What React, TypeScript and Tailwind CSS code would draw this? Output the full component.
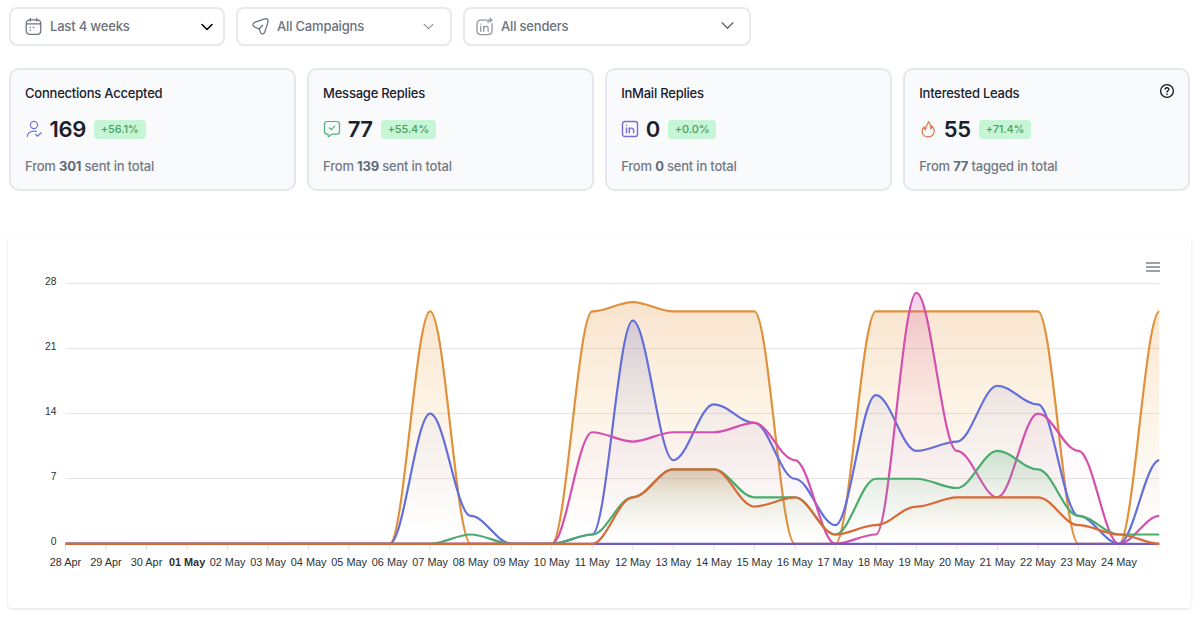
import type { ReactNode } from "react";
import clsx from "clsx";

const Svg = ({ className, children }: { className?: string; children: ReactNode }) => (
    <svg
        viewBox="0 0 24 24"
        fill="none"
        stroke="currentColor"
        strokeWidth={1.6}
        strokeLinecap="round"
        strokeLinejoin="round"
        className={clsx("flex-shrink-0", className)}
    >
        {children}
    </svg>
);

const CalendarIcon = () => (
    <Svg className="w-[19px] h-[19px]">
        <path d="M8 2v3M16 2v3M3 8.8h18" />
        <path d="M21.2 8.5V17c0 3-1.5 5-5 5H7.8c-3.5 0-5-2-5-5V8.5c0-3 1.5-5 5-5h8.4c3.5 0 5 2 5 5Z" />
        <path d="M8 13.2h.01M12 13.2h.01M8 16.8h.01" strokeWidth={2} />
    </Svg>
);

const SendIcon = () => (
    <Svg className="w-[19px] h-[19px]">
        <path d="M6.1 6.1 16.6 2.6c4.2-1.2 5.6.2 4.6 4.5l-3.3 10.6c-1.6 5-4.7 5.2-6.4.6l-1-3.2-3.7-1.4C1 11.6 1.2 8.1 6.1 6.1Z" />
        <path d="m10.7 14.6 4-4.2" />
    </Svg>
);

const SenderIcon = () => (
    <Svg className="w-[19px] h-[19px] text-[#8f949d]">
        <path d="M15 4H7.500C4.200 4 2.500 5.700 2.500 9v8.200c0 3.300 1.700 5 5 5h9c3.300 0 5-1.700 5-5V8.500" />
        <path d="M16.500 7V4H21M19 1.800 21.300 4 19 6.200" />
        <path d="M7.300 12v6M7.300 9v.01M11 18v-6M11 14.500c0-3.400 5.600-3.400 5.600 0V18" />
    </Svg>
);

const UserIcon = () => (
    <Svg className="w-[18px] h-[18px] text-[#7472dc]">
        <circle cx="12" cy="6.600" r="4.800" />
        <path d="M3 22c0-4 3.700-7.200 9-7.200 1.200 0 2.300.2 3.300.5" />
        <path d="m14.200 19.300 2.400 2.300 5-4.600" />
    </Svg>
);

const MessageIcon = () => (
    <Svg className="w-[18px] h-[18px] text-[#4fae7b]">
        <path d="M6.800 18.800H5.500c-2.300 0-3.500-1.200-3.500-3.500V5.500C2 3.200 3.200 2 5.500 2h13C20.800 2 22 3.200 22 5.500v9.800c0 2.300-1.200 3.500-3.500 3.500H12l-4 3.100c-.7.500-1.200.2-1.200-.6Z" />
        <path d="m8.400 10.500 2.500 2.400 4.800-4.700" />
    </Svg>
);

const InMailIcon = () => (
    <Svg className="w-[18px] h-[18px] text-[#7c6cd6]">
        <rect x="2" y="2" width="20" height="20" rx="3" strokeWidth={1.9} />
        <path d="M7.300 10.500v6.500M7.300 7v.01M11 17v-6.500M11 13.500c0-3.600 5.800-3.600 5.800 0V17" strokeWidth={1.9} />
    </Svg>
);

const FlameIcon = () => (
    <Svg className="w-[18px] h-[18px] text-[#e0744a]">
        <path d="M12.500 2.200c.4 3.200-4.300 5.500-3.800 10.600-1.400-.6-2-1.800-1.900-3.700-4.600 4.800-3 13.300 5.200 13.300 8.600 0 10.700-9.400 4.900-14.400.2 1.800-.1 3-1.200 3.800.2-3.800-.5-7.400-3.200-9.600Z" />
    </Svg>
);

const HelpIcon = () => (
    <Svg className="w-4 h-4 -mr-px text-[#111827]">
        <circle cx="12" cy="12" r="9.600" strokeWidth={2} />
        <path d="M9.200 9.300c.5-3.200 5.700-2.800 5.700.2 0 2-2.900 2.300-2.900 4" strokeWidth={2} />
        <path d="M12 17v.01" strokeWidth={2.4} />
    </Svg>
);

type SelectProps = {
    icon: ReactNode;
    label: string;
    className: string;
    chevronClass: string;
};

const Select = ({ icon, label, className, chevronClass }: SelectProps) => (
    <button
        className={clsx(
            "flex items-center h-[39px] border-2 border-[#e8e9ed] rounded-lg text-[13px] tracking-[-0.18px] font-medium text-[#6b7280]",
            className
        )}
    >
        {icon}
        <span className="ml-[7px] flex-grow text-left">{label}</span>
        <svg
            viewBox="0 0 12 8"
            fill="none"
            stroke="currentColor"
            strokeLinecap="round"
            strokeLinejoin="round"
            className={clsx("flex-shrink-0", chevronClass)}
        >
            <path d="m1 1.500 5 5 5-5" />
        </svg>
    </button>
);

type Stat = {
    title: string;
    icon: ReactNode;
    value: number;
    change: string;
    total: number;
    verb: string;
    help?: boolean;
};

const stats: Stat[] = [
    { title: "Connections Accepted", icon: <UserIcon />, value: 169, change: "+56.1%", total: 301, verb: "sent" },
    { title: "Message Replies", icon: <MessageIcon />, value: 77, change: "+55.4%", total: 139, verb: "sent" },
    { title: "InMail Replies", icon: <InMailIcon />, value: 0, change: "+0.0%", total: 0, verb: "sent" },
    { title: "Interested Leads", icon: <FlameIcon />, value: 55, change: "+71.4%", total: 77, verb: "tagged", help: true },
];

const StatCard = ({ title, icon, value, change, total, verb, help }: Stat) => (
    <div className="flex flex-col h-[123px] pt-[13px] px-[14px] bg-[#f9fafc] border-2 border-[#e5e7eb] rounded-[10px]">
        <div className="flex items-start justify-between h-5">
            <h3 className="text-[13px] leading-5 tracking-[-0.22px] font-medium text-[#1a202c]">{title}</h3>
            {help && <HelpIcon />}
        </div>
        <div className="flex items-center h-7 mt-[12px]">
            {icon}
            <span className="ml-[6.600px] text-[22px] leading-7 tracking-[-0.4px] font-semibold text-[#1a202c]">{value}</span>
            <span className="ml-2 px-[7px] h-[19px] leading-[19px] text-[11px] tracking-[-0.13px] font-medium text-[#48a05f] bg-[#c6f6d5] rounded">
                {change}
            </span>
        </div>
        <p className="mt-[13px] text-[13px] leading-5 tracking-[-0.2px] font-medium text-[#737985]">
            From <b className="font-bold text-[#626a78]">{total}</b> {verb} in total
        </p>
    </div>
);

// plot area
const LEFT = 57.5;
const RIGHT = 1151.5;
const TOP = 48.5;
const BOTTOM = 308.8;
const MAX = 28;

const labels = [
    "28 Apr", "29 Apr", "30 Apr", "01 May", "02 May", "03 May", "04 May", "05 May", "06 May",
    "07 May", "08 May", "09 May", "10 May", "11 May", "12 May", "13 May", "14 May", "15 May",
    "16 May", "17 May", "18 May", "19 May", "20 May", "21 May", "22 May", "23 May", "24 May",
];

const series = [
    { id: "sent", color: "#e0913a", mid: 0.14, midColor: "#f0ac4e", data: [0, 0, 0, 0, 0, 0, 0, 0, 0, 25, 0, 0, 0, 25, 26, 25, 25, 25, 0, 0, 25, 25, 25, 25, 25, 0, 0, 25] },
    { id: "accepted", color: "#626fda", mid: 0.07, midColor: "#7f88e0", data: [0, 0, 0, 0, 0, 0, 0, 0, 0, 14, 3, 0, 0, 1, 24, 9, 15, 13, 7, 2, 16, 10, 11, 17, 15, 3, 0, 9] },
    { id: "messages", color: "#d44fae", mid: 0.07, midColor: "#e278bd", data: [0, 0, 0, 0, 0, 0, 0, 0, 0, 0, 0, 0, 0, 12, 11, 12, 12, 13, 9, 0, 1, 27, 10, 5, 14, 10, 0, 3] },
    { id: "replies", color: "#4bab6d", mid: 0.11, midColor: "#76c290", data: [0, 0, 0, 0, 0, 0, 0, 0, 0, 0, 1, 0, 0, 1, 5, 8, 8, 5, 5, 1, 7, 7, 6, 10, 8, 3, 1, 1] },
    { id: "inmail", color: "#6f5cc8", mid: 0, midColor: "#6f5cc8", data: [0, 0, 0, 0, 0, 0, 0, 0, 0, 0, 0, 0, 0, 0, 0, 0, 0, 0, 0, 0, 0, 0, 0, 0, 0, 0, 0, 0] },
    { id: "leads", color: "#d96a37", mid: 0.08, midColor: "#d9a060", data: [0, 0, 0, 0, 0, 0, 0, 0, 0, 0, 0, 0, 0, 0, 5, 8, 8, 4, 5, 1, 2, 4, 5, 5, 5, 2, 1, 0] },
];

const step = (RIGHT - LEFT) / 27;
const xAt = (i: number) => LEFT + i * step;
const yAt = (v: number) => BOTTOM - (v / MAX) * (BOTTOM - TOP);

// smooth line, flat at every point
const linePath = (data: number[]) =>
    data
        .map((v, i) => {
            if (i === 0) return `M${xAt(0)},${yAt(v)}`;
            const c = step * 0.35;
            return `C${xAt(i - 1) + c},${yAt(data[i - 1])} ${xAt(i) - c},${yAt(v)} ${xAt(i)},${yAt(v)}`;
        })
        .join("");

const Chart = () => (
    <svg width="1183" height="373" viewBox="0 0 1183 373" className="block font-['Liberation_Sans',sans-serif]">
        <defs>
            {series.map((s) => (
                <linearGradient key={s.id} id={s.id} x1="0" y1="0" x2="0" y2="1">
                    <stop offset="0" stopColor={s.color} stopOpacity={0.25} />
                    <stop offset="0.45" stopColor={s.midColor} stopOpacity={s.mid} />
                    <stop offset="0.95" stopColor={s.midColor} stopOpacity={0} />
                </linearGradient>
            ))}
            <clipPath id="plot">
                <rect x={LEFT} y="40" width={RIGHT - LEFT} height="272" />
            </clipPath>
        </defs>
        {[28, 21, 14, 7, 0].map((v) => (
            <g key={v}>
                <line x1={LEFT} x2={RIGHT} y1={Math.floor(yAt(v)) + 0.5} y2={Math.floor(yAt(v)) + 0.5} stroke="#e4e4e4" />
                <text x="48.500" y={Math.floor(yAt(v)) + 1.800} textAnchor="end" fontSize="10.300" fill="#2b3033">
                    {v}
                </text>
            </g>
        ))}
        {labels.map((label, i) => (
            <g key={label}>
                <line x1={xAt(i)} x2={xAt(i)} y1={BOTTOM} y2={BOTTOM + 6} stroke="#e0e0e0" />
                <text
                    x={xAt(i)}
                    y="331"
                    textAnchor="middle"
                    fontSize="10.900"
                    fontWeight={label === "01 May" ? 700 : 400}
                    fill="#2b3033"
                >
                    {label}
                </text>
            </g>
        ))}
        <g clipPath="url(#plot)">
            {series.map((s) => (
                <g key={s.id}>
                    <path d={`${linePath(s.data)}L${RIGHT},${BOTTOM}L${LEFT},${BOTTOM}Z`} fill={`url(#${s.id})`} />
                    <path d={linePath(s.data)} fill="none" stroke={s.color} strokeWidth="2.200" />
                </g>
            ))}
        </g>
        <path d="M1138 28h14M1138 32h14M1138 36h14" stroke="#76848f" strokeWidth="1.500" />
    </svg>
);

export default function App() {
    return (
        <div className="w-[1200px] h-[618px] pt-[7px] overflow-hidden bg-white font-['Inter',sans-serif]">
            <div className="flex gap-[11px] ml-[9px]">
                <Select
                    icon={<CalendarIcon />}
                    label="Last 4 weeks"
                    className="w-[216px] pl-[13px] pr-[10px]"
                    chevronClass="w-3 h-2 text-black stroke-[1.500]"
                />
                <Select
                    icon={<SendIcon />}
                    label="All Campaigns"
                    className="w-[216px] pl-[13px] pr-[16px]"
                    chevronClass="w-[11px] h-[7px] text-[#8a8f98] stroke-[1.300]"
                />
                <Select
                    icon={<SenderIcon />}
                    label="All senders"
                    className="w-[288px] pl-[10px] pr-[15px]"
                    chevronClass="w-[13px] h-[9px] mb-[3px] text-[#5f6672] stroke-[1.200]"
                />
            </div>
            <div className="grid grid-cols-4 gap-[11.3px] w-[1181px] mt-[22px] ml-[9px]">
                {stats.map((stat) => (
                    <StatCard key={stat.title} {...stat} />
                ))}
            </div>
            <div className="w-[1183px] h-[373px] mt-[44px] ml-2 rounded bg-white shadow-[0_1px_3px_rgba(0,0,0,0.12)]">
                <Chart />
            </div>
        </div>
    );
}
